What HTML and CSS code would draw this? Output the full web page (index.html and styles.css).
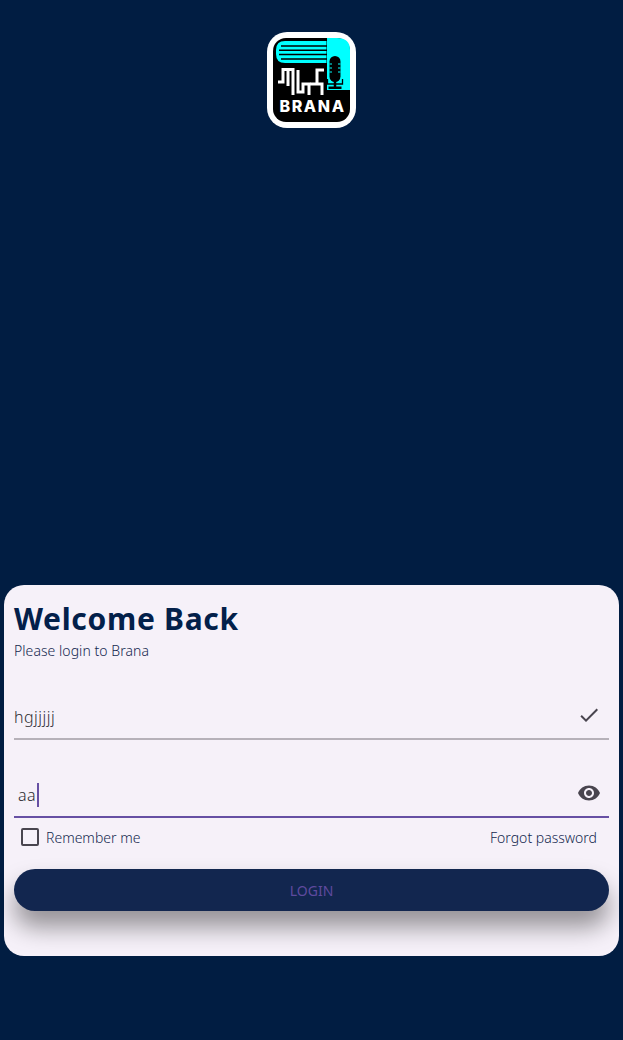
FILE: index.html
```html
<!DOCTYPE html>
<html lang="en">
<head>
<meta charset="utf-8">
<title>Brana Login</title>
<link rel="stylesheet" href="styles.css">
</head>
<body>
<main class="screen">
  <div class="logo-wrap">
    <svg class="logo" width="89" height="96" viewBox="0 0 89 96" role="img" aria-label="Brana logo">
      <rect x="0" y="0" width="89" height="96" rx="20" fill="#fff"/>
      <rect x="6" y="6" width="77" height="84" rx="13" fill="#000"/>
      <path d="M18 9H59.500V31H18Q9 31 9 22V18Q9 9 18 9Z" fill="#00ffff"/>
      <path d="M60 6H70Q83 6 83 18V58H60Z" fill="#00ffff"/>
      <path d="M14 14H60M12 18.300H60M12 22.600H60M14 27H60" stroke="#000" stroke-width="1.500"/>
      <rect x="62.500" y="24" width="11" height="26" rx="5.500" fill="#000"/>
      <path d="M62.500 32H65M71 32H73.500M62.500 36H65M71 36H73.500M62.500 40H65M71 40H73.500" stroke="#00ffff" stroke-width="1"/>
      <path d="M68 49V55M61.500 55.700H74.500" stroke="#000" stroke-width="2.500" fill="none"/>
      <path d="M60.500 47V52H75.500V47" stroke="#000" stroke-width="1.300" fill="none"/>
      <g fill="none" stroke="#fff" stroke-width="3">
        <path d="M11 50H16V37.500H26V63M21 38V54"/>
        <path d="M31 38V60H36V52H42V63"/>
        <path d="M57 38H50V52M43 52H55V63"/>
      </g>
      <text class="logo-text" x="45.500" y="80" text-anchor="middle">BRANA</text>
    </svg>
  </div>
  <section class="card">
    <h1 class="title">Welcome Back</h1>
    <p class="subtitle">Please login to Brana</p>
    <div class="field field-user">
      <span class="value">hgjjjjj</span>
      <svg class="icon" width="24" height="24" viewBox="0 0 24 24"><path d="M9 16.170 4.830 12l-1.420 1.410L9 19 21 7l-1.410-1.410z" fill="#49454f"/></svg>
    </div>
    <div class="field field-pass">
      <span class="value value-pass">aa<span class="caret"></span></span>
      <svg class="icon" width="24" height="24" viewBox="0 0 24 24"><path d="M12 4.500C7 4.500 2.730 7.610 1 12c1.730 4.390 6 7.500 11 7.500s9.270-3.110 11-7.500c-1.730-4.390-6-7.500-11-7.500zM12 17c-2.760 0-5-2.240-5-5s2.240-5 5-5 5 2.240 5 5-2.240 5-5 5zm0-8c-1.660 0-3 1.340-3 3s1.340 3 3 3 3-1.340 3-3-1.340-3-3-3z" fill="#49454f"/></svg>
    </div>
    <div class="options">
      <label class="remember"><span class="checkbox"></span><span>Remember me</span></label>
      <span class="forgot">Forgot password</span>
    </div>
    <button class="login" type="button">LOGIN</button>
  </section>
</main>
</body>
</html>
```
FILE: styles.css
```css
* { box-sizing: border-box; }
html, body { margin: 0; padding: 0; }
body {
  width: 623px;
  height: 1040px;
  background: #011d42;
  font-family: "Noto Sans", "Open Sans", sans-serif;
  overflow: hidden;
}
.screen {
  display: flex;
  flex-direction: column;
  height: 1040px;
  padding: 32px 4px 84px;
  justify-content: space-between;
}
.logo-wrap { display: flex; justify-content: center; }
.logo { display: block; }
.logo-text {
  font-family: Inter, sans-serif;
  font-weight: 800;
  font-size: 16px;
  letter-spacing: 1.6px;
  fill: #fff;
}
.card {
  height: 371px;
  background: #f6f1f9;
  border-radius: 20px;
  padding: 15px 10px 0;
}
.title {
  margin: 0;
  font-size: 30px;
  line-height: 38px;
  font-weight: 700;
  color: #03204a;
  letter-spacing: 0.7px;
}
.subtitle {
  margin: 3px 0 0;
  font-size: 14px;
  line-height: 20px;
  font-weight: 300;
  letter-spacing: 0.05px;
  color: #14284f;
}
.field {
  display: flex;
  align-items: center;
  justify-content: space-between;
  height: 56px;
  border-bottom: 2px solid #b6b1b9;
  padding: 12px 8px 0 0;
  font-size: 16px;
  font-weight: 300;
  letter-spacing: 0.5px;
  color: #2f2d33;
}
.field-user { margin-top: 23px; }
.field-pass {
  margin-top: 22px;
  border-bottom-color: #6750a4;
}
.icon { margin-bottom: 4px; }
.value-pass {
  display: flex;
  align-items: center;
  padding-left: 4px;
}
.caret {
  display: inline-block;
  width: 2px;
  height: 24px;
  margin-left: 1px;
  background: #6750a4;
}
.options {
  display: flex;
  align-items: center;
  justify-content: space-between;
  height: 38px;
  padding: 0 12px 0 7px;
  font-size: 14px;
  font-weight: 300;
  color: #14284f;
}
.remember { display: flex; align-items: center; gap: 7px; }
.checkbox {
  width: 18px;
  height: 18px;
  border: 2px solid #49454f;
  border-radius: 2px;
}
.login {
  display: block;
  width: 100%;
  height: 42px;
  margin-top: 13px;
  border: 0;
  border-radius: 21px;
  background: #12264f;
  color: #5f4a9e;
  font-family: inherit;
  font-size: 14px;
  box-shadow: 0 16px 24px rgba(0, 0, 0, 0.4);
}
```
